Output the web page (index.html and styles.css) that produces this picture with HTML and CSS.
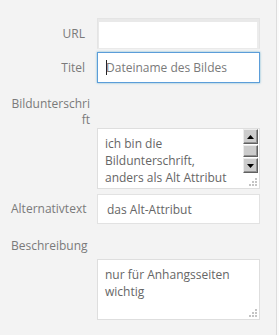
FILE: index.html
```html
<!DOCTYPE html>
<html lang="de">
<head>
<meta charset="utf-8">
<title>Anhang-Details</title>
<link rel="stylesheet" href="styles.css">
</head>
<body>
<div class="panel">
  <label class="row row-url">
    <span class="name">URL</span>
    <span class="field field-readonly"></span>
  </label>
  <label class="row row-title">
    <span class="name">Titel</span>
    <span class="field field-focus"><span class="caret"></span><span class="placeholder">Dateiname des Bildes</span></span>
  </label>
  <div class="label-block label-caption">Bildunterschri<wbr>ft</div>
  <div class="area area-caption">
    <div class="area-text">ich bin die<br>Bildunterschrift,<br>anders als Alt Attribut</div>
    <div class="scrollbar">
      <span class="sb-btn sb-up"><svg width="7" height="4" viewBox="0 0 7 4"><path d="M0 4 L3.5 0 L7 4 Z" fill="#000"/></svg></span>
      <span class="sb-btn sb-thumb"></span>
      <span class="sb-btn sb-down"><svg width="7" height="4" viewBox="0 0 7 4"><path d="M0 0 L7 0 L3.5 4 Z" fill="#000"/></svg></span>
    </div>
    <svg class="grip" width="8" height="8" viewBox="0 0 8 8"><g fill="#c4c4c4"><rect x="6" y="0" width="2" height="2"/><rect x="3" y="3" width="2" height="2"/><rect x="6" y="3" width="2" height="2"/><rect x="0" y="6" width="2" height="2"/><rect x="3" y="6" width="2" height="2"/><rect x="6" y="6" width="2" height="2"/></g></svg>
  </div>
  <label class="row row-alt">
    <span class="name">Alternativtext</span>
    <span class="field field-plain">das Alt-Attribut</span>
  </label>
  <div class="label-block label-desc">Beschreibung</div>
  <div class="area area-desc">
    <div class="area-text">nur für Anhangsseiten<br>wichtig</div>
    <svg class="grip" width="8" height="8" viewBox="0 0 8 8"><g fill="#c4c4c4"><rect x="6" y="0" width="2" height="2"/><rect x="3" y="3" width="2" height="2"/><rect x="6" y="3" width="2" height="2"/><rect x="0" y="6" width="2" height="2"/><rect x="3" y="6" width="2" height="2"/><rect x="6" y="6" width="2" height="2"/></g></svg>
  </div>
</div>
</body>
</html>
```

FILE: styles.css
```css
html, body {
  margin: 0;
  padding: 0;
}
body {
  background: #fbfbfb;
  font-family: "Open Sans", "Liberation Sans", sans-serif;
  font-size: 12px;
  color: #777;
}
.panel {
  width: 277px;
  height: 335px;
  box-sizing: border-box;
  background: #f3f3f3;
  border-right: 1px solid #dcdcdc;
  padding: 18px 0 0 11px;
}
.row {
  display: flex;
  align-items: center;
}
.name {
  width: 74px;
  margin-right: 12px;
  text-align: right;
  color: #7a7a7a;
  line-height: 16px;
}
.field {
  box-sizing: border-box;
  width: 163px;
  display: flex;
  align-items: center;
  background: #fff;
  line-height: 17px;
  color: #666;
}
.field-readonly {
  height: 31px;
  border: 1px solid #e4e4e4;
  border-bottom-color: #eaeaea;
  box-shadow: inset 1px 3px 0 #e9e9e9, inset -2px 0 0 #ececec;
}
.row-title {
  margin-top: 3px;
}
.field-focus {
  height: 31px;
  border: 1px solid #5b9dd9;
  box-shadow: 0 0 2px rgba(30, 140, 190, 0.6);
  padding-left: 8px;
}
.caret {
  display: inline-block;
  width: 1px;
  height: 15px;
  background: #222;
  margin-right: -1px;
}
.placeholder {
  color: #7a7a7a;
}
.label-block {
  line-height: 16px;
  color: #7a7a7a;
}
.label-caption {
  width: 79px;
  text-align: right;
  margin-top: 13px;
}
.area {
  position: relative;
  box-sizing: border-box;
  width: 163px;
  height: 61px;
  margin-left: 86px;
  background: #fff;
  border: 1px solid #dedede;
  display: flex;
  justify-content: space-between;
  color: #666;
}
.area-caption {
  margin-top: 0;
}
.area-text {
  padding: 6px 0 0 7px;
  line-height: 17px;
  white-space: nowrap;
}
.scrollbar {
  width: 15px;
  margin-right: 1px;
  display: flex;
  flex-direction: column;
  gap: 1px;
}
.sb-btn {
  box-sizing: border-box;
  height: 15px;
  background: #cccccc;
  border: 1px solid;
  border-color: #ececec #606060 #606060 #ececec;
  box-shadow: inset -1px -1px 0 #929292;
  display: flex;
  align-items: center;
  justify-content: center;
}
.sb-thumb {
  height: 12px;
}
.grip {
  position: absolute;
  right: 2px;
  bottom: 2px;
}
.row-alt {
  margin-top: 5px;
}
.field-plain {
  height: 30px;
  border: 1px solid #e2e2e2;
  padding-left: 9px;
}
.label-desc {
  margin-top: 14px;
}
.area-desc {
  margin-top: 5px;
}
```
